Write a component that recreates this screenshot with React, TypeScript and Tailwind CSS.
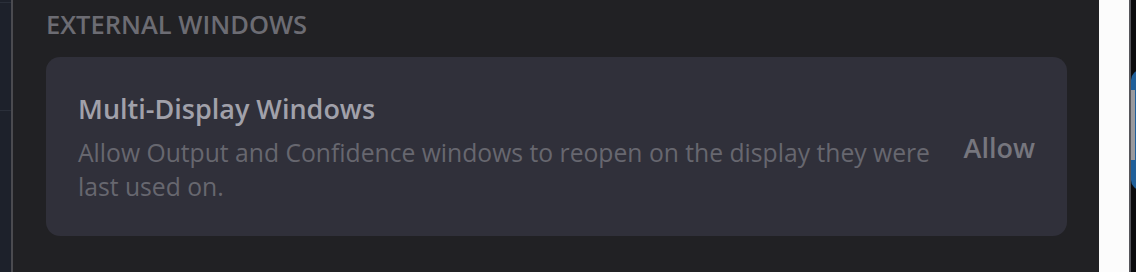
export default function App() {
  return (
    <div className="flex h-[272px] w-[1136px] overflow-hidden bg-[#212124] font-['Open_Sans','Noto_Sans',sans-serif]">
      {/* collapsed side panel */}
      <div className="flex w-[13px] shrink-0 flex-col border-r-2 border-[#4b4b50] bg-[#1d212b]">
        <div className="mt-[2px] h-[1px] bg-[#2a2f3a]" />
        <div className="mt-[107px] h-[1px] bg-[#2a2f3a]" />
      </div>

      <main className="flex-1 pl-[33px] pr-[32px] pt-[7px]">
        <h2 className="text-[25.5px] font-semibold uppercase leading-[34px] text-[#6c6c73]">
          External Windows
        </h2>

        <section className="mt-[16px] flex h-[179px] items-center gap-[24px] rounded-[14px] bg-[#30303a] px-[32px]">
          <div className="flex-1 pt-[2px]">
            <h3 className="text-[27px] font-semibold leading-[36px] text-[#a1a1aa]">
              Multi-Display Windows
            </h3>
            <p className="mt-[9px] text-[24.7px] leading-[34px] text-[#67676f]">
              Allow Output and Confidence windows to reopen on the display they were last used on.
            </p>
          </div>
          <button type="button" className="mt-[4px] text-[27px] font-semibold text-[#76767e]">
            Allow
          </button>
        </section>
      </main>

      <div className="w-[30px] shrink-0 bg-[#fcfcfc]" />
      <div className="relative w-[7px] shrink-0 overflow-hidden border-l-2 border-[#55555a] bg-[#0b0b0d]">
        <div className="absolute left-0 top-[70px] h-[120px] w-[20px] rounded-full bg-[#1f5f9a]" />
        <div className="absolute left-0 top-[90px] h-[70px] w-[4px] bg-[#9a9a9e]" />
      </div>
    </div>
  );
}
